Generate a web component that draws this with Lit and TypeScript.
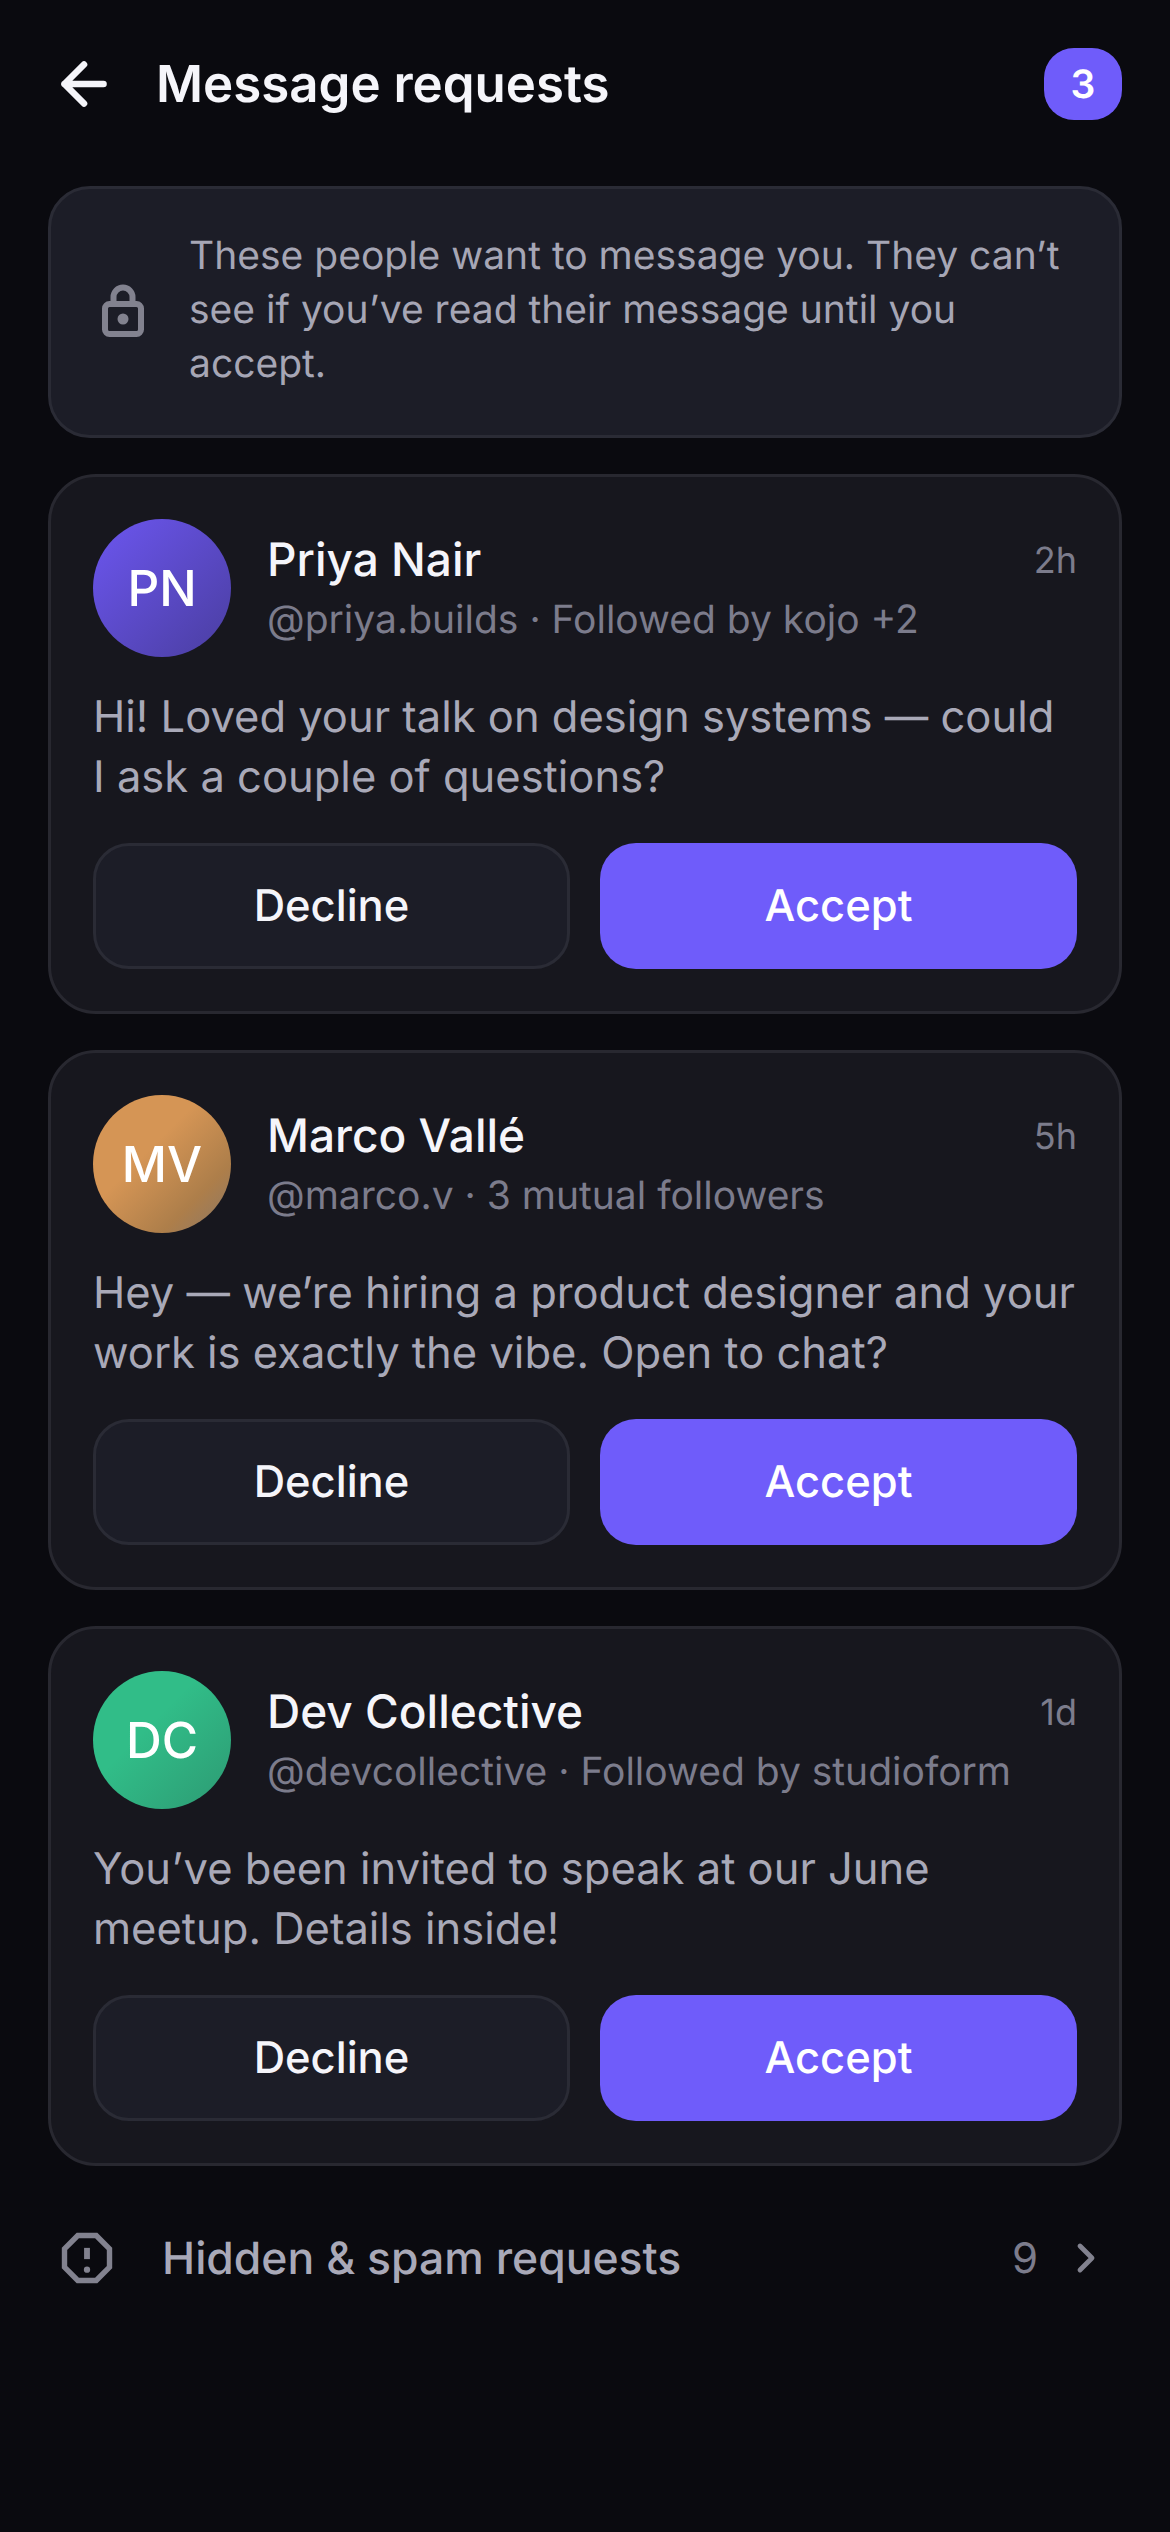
import { LitElement, html, css, svg } from "lit";
import { customElement } from "lit/decorators.js";

interface Request {
  initials: string;
  tone: string;
  name: string;
  meta: string;
  time: string;
  text: string;
}

const REQUESTS: Request[] = [
  {
    initials: "PN",
    tone: "violet",
    name: "Priya Nair",
    meta: "@priya.builds · Followed by kojo +2",
    time: "2h",
    text: "Hi! Loved your talk on design systems — could I ask a couple of questions?",
  },
  {
    initials: "MV",
    tone: "amber",
    name: "Marco Vallé",
    meta: "@marco.v · 3 mutual followers",
    time: "5h",
    text: "Hey — we’re hiring a product designer and your work is exactly the vibe. Open to chat?",
  },
  {
    initials: "DC",
    tone: "green",
    name: "Dev Collective",
    meta: "@devcollective · Followed by studioform",
    time: "1d",
    text: "You’ve been invited to speak at our June meetup. Details inside!",
  },
];

const backIcon = svg`<path d="M18.5 12H5.5M12 18.5L5.5 12 12 5.5" />`;
const lockIcon = svg`<rect x="4.8" y="8.8" width="14.4" height="12" rx="1.8" /><path d="M8.2 8.8V6a3.8 3.8 0 0 1 7.6 0v2.8" /><circle cx="12" cy="14.8" r="2.2" fill="currentColor" stroke="none" />`;
const alertIcon = svg`<path stroke-linejoin="miter" d="M7.9 2h8.2L22 7.9v8.2L16.1 22H7.9L2 16.1V7.9z" /><path d="M12 7.5v5" stroke-width="2.6" stroke-linecap="butt" /><circle cx="12" cy="17.2" r="1.4" fill="currentColor" stroke="none" />`;
const chevronIcon = svg`<path d="M9 6l6 6-6 6" />`;

@customElement("app-root")
export class AppRoot extends LitElement {
  static styles = css`
    :host {
      display: block;
      min-height: 2532px;
      background: #0a0a0f;
      font-family: Inter, "Liberation Sans", sans-serif;
      color: #f5f5fa;
      text-rendering: geometricPrecision;
    }
    svg {
      display: block;
      flex: none;
      fill: none;
      stroke: currentColor;
      stroke-linecap: round;
      stroke-linejoin: round;
    }
    .page {
      display: flex;
      flex-direction: column;
      gap: 36px;
      padding: 48px 48px 0;
    }
    .header {
      display: flex;
      align-items: center;
      gap: 36px;
      height: 72px;
      margin-bottom: 30px;
    }
    .back {
      width: 72px;
      height: 72px;
      stroke-width: 2.2;
    }
    .title {
      flex: 1;
      font-size: 51px;
      font-weight: 600;
    }
    .badge {
      display: flex;
      align-items: center;
      justify-content: center;
      width: 78px;
      height: 72px;
      border-radius: 30px;
      background: #6f5cfa;
      font-size: 39px;
      font-weight: 600;
      color: #fff;
    }
    .info {
      display: flex;
      align-items: center;
      gap: 36px;
      padding: 42px;
      border: 3px solid #2a2b35;
      border-radius: 42px;
      background: #1c1d27;
      font-size: 39px;
      line-height: 54px;
      color: #a6a6b5;
    }
    .info svg {
      width: 60px;
      height: 60px;
      color: #82828f;
      stroke-width: 2.4;
    }
    .info-text {
      margin: -2px 0 2px;
    }
    .card {
      display: flex;
      flex-direction: column;
      padding: 42px;
      border: 3px solid #282830;
      border-radius: 48px;
      background: #17171e;
    }
    .top {
      display: flex;
      align-items: center;
      gap: 36px;
    }
    .avatar {
      display: flex;
      align-items: center;
      justify-content: center;
      flex: none;
      width: 138px;
      height: 138px;
      border-radius: 50%;
      font-size: 49.5px;
      font-weight: 500;
      color: #fff;
    }
    .violet {
      background: linear-gradient(135deg, #6c56f0, #4a3ea0);
    }
    .amber {
      background: linear-gradient(135deg, #d59555 40%, #ad7e4a 75%, #8a7868);
    }
    .green {
      background: linear-gradient(135deg, #31bd88 40%, #2d9a73);
    }
    .who {
      flex: 1;
      min-width: 0;
      padding-top: 3px;
    }
    .row {
      display: flex;
      align-items: center;
      justify-content: space-between;
    }
    .name {
      font-size: 46px;
      font-weight: 500;
      line-height: 60px;
    }
    .time {
      font-size: 36px;
      color: #7c7c8c;
    }
    .meta {
      font-size: 39px;
      line-height: 60px;
      color: #7c7c8c;
    }
    .text {
      margin: 30px 0 36px;
      font-size: 43.5px;
      line-height: 60px;
      color: #a9a9b8;
    }
    .actions {
      display: grid;
      grid-template-columns: 1fr 1fr;
      gap: 30px;
    }
    .btn {
      display: flex;
      align-items: center;
      justify-content: center;
      height: 126px;
      box-sizing: border-box;
      border-radius: 36px;
      font-size: 43.5px;
      font-weight: 500;
    }
    .decline {
      border: 3px solid #2a2b35;
      background: #1c1d27;
    }
    .accept {
      background: #6f5cfa;
      color: #fff;
    }
    .spam {
      display: flex;
      align-items: center;
      padding: 0 12px;
      height: 112px;
      color: #a9a9b8;
      font-size: 44.5px;
      font-weight: 500;
    }
    .spam .shield {
      width: 54px;
      height: 54px;
      color: #82828f;
      stroke-width: 2.4;
      margin-right: 48px;
    }
    .spam .label {
      flex: 1;
    }
    .spam .count {
      color: #7c7c8c;
      font-size: 42px;
      font-weight: 400;
      margin-right: 24px;
    }
    .spam .chev {
      width: 48px;
      height: 48px;
      color: #82828f;
      stroke-width: 2.4;
    }
  `;

  private renderCard(r: Request) {
    return html`
      <section class="card">
        <div class="top">
          <div class="avatar ${r.tone}">${r.initials}</div>
          <div class="who">
            <div class="row">
              <span class="name">${r.name}</span>
              <span class="time">${r.time}</span>
            </div>
            <div class="meta">${r.meta}</div>
          </div>
        </div>
        <p class="text">${r.text}</p>
        <div class="actions">
          <div class="btn decline">Decline</div>
          <div class="btn accept">Accept</div>
        </div>
      </section>
    `;
  }

  render() {
    return html`
      <div class="page">
        <header class="header">
          <svg class="back" viewBox="0 0 24 24">${backIcon}</svg>
          <div class="title">Message requests</div>
          <div class="badge">3</div>
        </header>
        <div class="info">
          <svg viewBox="0 0 24 24">${lockIcon}</svg>
          <div class="info-text">These people want to message you. They can’t see if you’ve read their message until you accept.</div>
        </div>
        ${REQUESTS.map((r) => this.renderCard(r))}
        <div class="spam">
          <svg class="shield" viewBox="0 0 24 24">${alertIcon}</svg>
          <span class="label">Hidden &amp; spam requests</span>
          <span class="count">9</span>
          <svg class="chev" viewBox="0 0 24 24">${chevronIcon}</svg>
        </div>
      </div>
    `;
  }
}
